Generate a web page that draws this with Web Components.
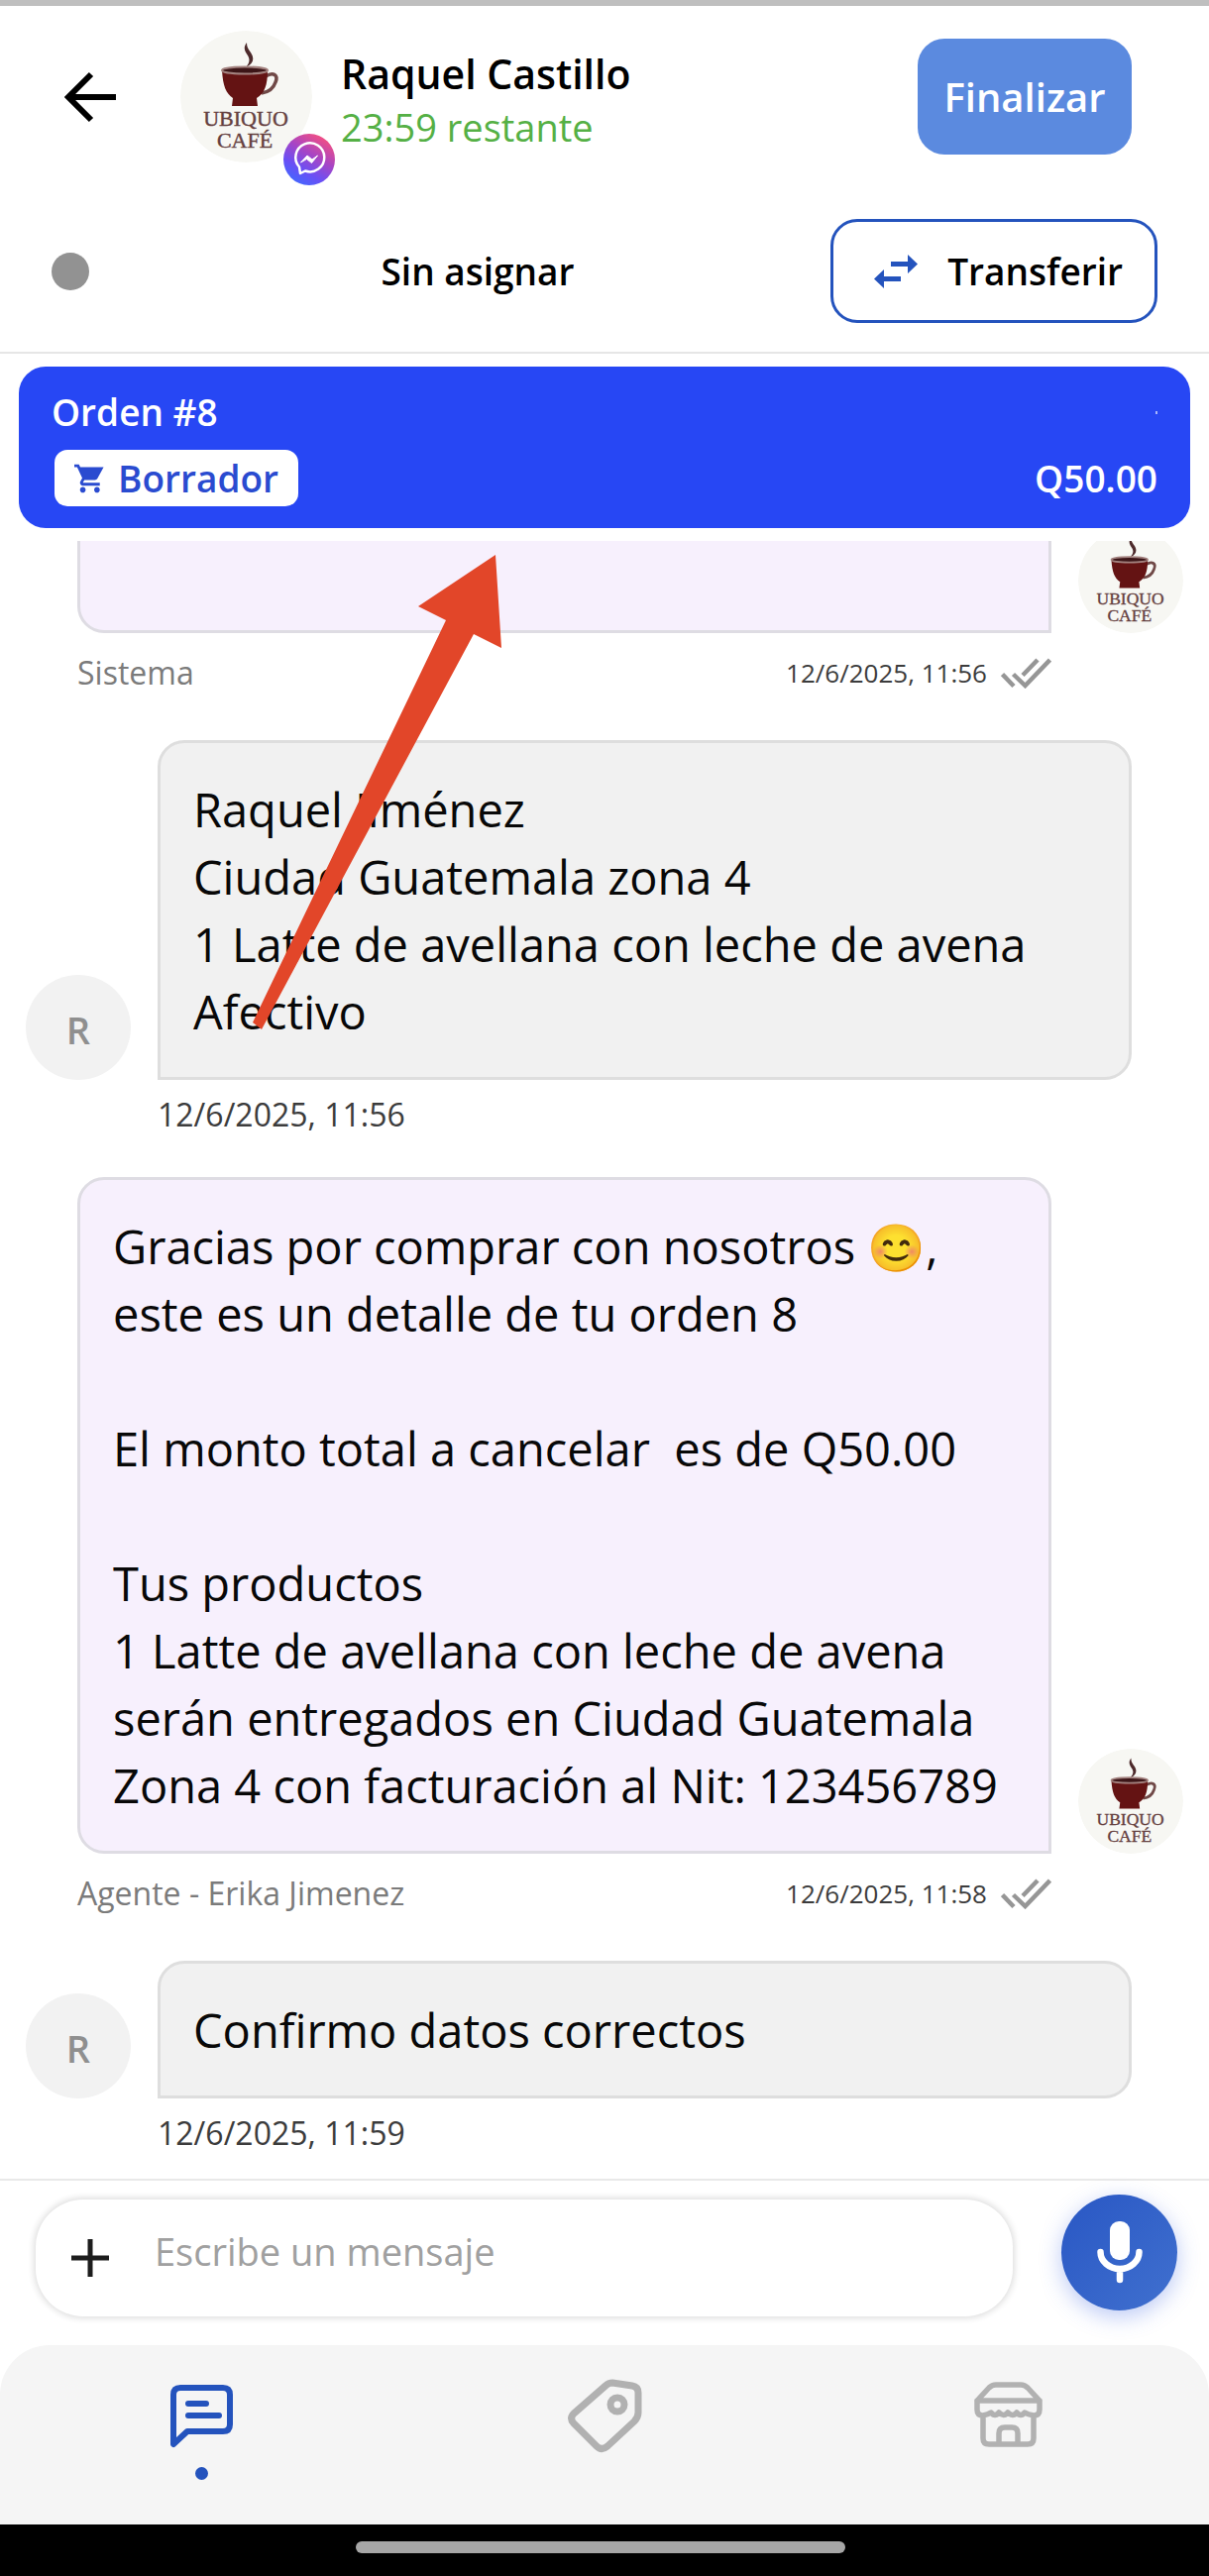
<!DOCTYPE html>
<html lang="es">
<head>
<meta charset="utf-8">
<meta name="viewport" content="width=device-width, initial-scale=1">
<title>Conversación - Raquel Castillo</title>
<style>
  html, body { margin: 0; height: 100%; }
  body { background: #fff; color: #000; font-family: "Open Sans", "Noto Sans", sans-serif; }
</style>
</head>
<body>
<chat-screen>
  <chat-header slot="header" name="Raquel Castillo" remaining="23:59 restante" assignee="Sin asignar"></chat-header>
  <order-card slot="order" state="Borrador" total="Q50.00">Orden #8</order-card>
  <chat-message kind="sent" author="Sistema" time="12/6/2025, 11:56"></chat-message>
  <chat-message kind="received" initial="R" time="12/6/2025, 11:56">Raquel Jiménez
Ciudad Guatemala zona 4
1 Latte de avellana con leche de avena
Afectivo</chat-message>
  <chat-message kind="sent" author="Agente - Erika Jimenez" time="12/6/2025, 11:58">Gracias por comprar con nosotros 😊,
este es un detalle de tu orden 8

El monto total a cancelar  es de Q50.00

Tus productos
1 Latte de avellana con leche de avena
serán entregados en Ciudad Guatemala
Zona 4 con facturación al Nit: 123456789</chat-message>
  <chat-message kind="received" initial="R" time="12/6/2025, 11:59">Confirmo datos correctos</chat-message>
  <pointer-arrow slot="overlay"></pointer-arrow>
  <message-composer slot="composer"></message-composer>
  <bottom-nav slot="nav"></bottom-nav>
</chat-screen>

<script>
const define = (name, render) => customElements.define(name, class extends HTMLElement {
  connectedCallback() {
    if (this.shadowRoot) return;
    this.attachShadow({ mode: "open" }).innerHTML = render(this);
  }
});
const attr = (el, name) => el.getAttribute(name) || "";

define("chat-screen", () => `
  <style>
    :host { display: flex; flex-direction: column; height: 100vh; position: relative; }
    .status { height: 6px; background: #bfbfbf; flex: none; }
    .thread { flex: 1; min-height: 0; margin-top: 13px; overflow: hidden; display: flex; flex-direction: column; justify-content: flex-end; gap: 38px; padding: 0 26px 21px; }
  </style>
  <div class="status"></div>
  <slot name="header"></slot>
  <slot name="order"></slot>
  <main class="thread"><slot></slot></main>
  <slot name="composer"></slot>
  <slot name="nav"></slot>
  <slot name="overlay"></slot>
`);

define("cafe-logo", () => `
  <style>
    :host { display: block; border-radius: 50%; overflow: hidden; }
    svg { display: block; width: 100%; height: 100%; }
    text { font-family: "Liberation Serif", serif; font-size: 22px; fill: #65403f; stroke: #65403f; stroke-width: .4px; text-anchor: middle; }
  </style>
  <svg viewBox="0 0 133 133" role="img" aria-label="Ubiquo Café">
    <circle cx="66.500" cy="66.500" r="66.500" fill="#f7f7f3"/>
    <path d="M67 12c-4 5-2 9 1 13 3 5 1 8-2 12 8-4 9-9 5-15-3-4-4-6-4-10z" fill="#4d2a2b"/>
    <path d="M86 46c8-5 13-1 10 6-2 6-7 10-14 11" fill="none" stroke="#704947" stroke-width="3.500"/>
    <path d="M42 40c1 16 4 23 11 28l-1 8h26l-1-8c8-5 11-13 11-28z" fill="#641313"/>
    <ellipse cx="65" cy="40" rx="23" ry="3.500" fill="#3c1517" stroke="#a3827f" stroke-width="2"/>
    <text x="66" y="96">UBIQUO</text>
    <text x="65" y="118">CAFÉ</text>
  </svg>
`);

define("chat-header", el => `
  <style>
    :host { display: block; flex: none; border-bottom: 2px solid #e6e6e6; }
    .row { display: flex; align-items: center; }
    .top { padding: 25px 78px 0 62px; }
    .bottom { padding: 57px 52px 29px; }
    button { font: inherit; cursor: pointer; }
    .back { border: 0; background: none; padding: 0; width: 60px; height: 60px; margin-right: 60px; }
    .back svg, .transfer svg, .badge { display: block; }
    .avatar { position: relative; width: 133px; height: 133px; margin-right: 29px; }
    .badge { position: absolute; right: -23px; bottom: -23px; width: 52px; height: 52px; }
    .who { flex: 1; padding-top: 8px; }
    h1, p { margin: 0; }
    h1 { font-size: 41px; line-height: 52px; font-weight: 600; }
    p { font-size: 38px; line-height: 56px; color: #55b045; }
    .finish { width: 216px; height: 117px; border: 0; border-radius: 27px; background: #5b8adf; color: #fff; font-size: 40px; font-weight: 600; padding: 0; }
    .dot { width: 38px; height: 38px; border-radius: 50%; background: #929292; margin-right: 36px; }
    .assignee { flex: 1; text-align: center; font-size: 37px; font-weight: 600; }
    .transfer { display: flex; align-items: center; justify-content: space-between; width: 330px; height: 105px; box-sizing: border-box; border: 3px solid #2453bd; border-radius: 27px; background: #fff; color: #000; padding: 0 32px 0 41px; font-size: 37px; font-weight: 600; }
  </style>
  <div class="row top">
    <button class="back" aria-label="Volver"><svg viewBox="0 0 60 60"><path d="M55 30H8M30 7 7 30l23 23" fill="none" stroke="#000" stroke-width="6"/></svg></button>
    <div class="avatar">
      <cafe-logo style="height:100%"></cafe-logo>
      <svg class="badge" viewBox="0 0 52 52" role="img" aria-label="Messenger">
        <defs><linearGradient id="g" x1="0.200" y1="1" x2="0.800" y2="0"><stop offset="0" stop-color="#3d6bff"/><stop offset=".3" stop-color="#6a4ff5"/><stop offset=".6" stop-color="#a845c4"/><stop offset="1" stop-color="#ff5078"/></linearGradient></defs>
        <circle cx="26" cy="26" r="26" fill="url(#g)"/>
        <path d="M17 40l5-2.500A14.500 14.500 0 1 0 16 33.500z" fill="none" stroke="#fff" stroke-width="2.500" stroke-linejoin="round"/>
        <path d="M17.500 29l6.500-7 5 4 5.500-4-6 7.500-5-4z" fill="#fff" stroke="#fff"/>
      </svg>
    </div>
    <div class="who"><h1>${attr(el, "name")}</h1><p>${attr(el, "remaining")}</p></div>
    <button class="finish">Finalizar</button>
  </div>
  <div class="row bottom">
    <span class="dot"></span>
    <span class="assignee">${attr(el, "assignee")}</span>
    <button class="transfer"><svg width="44" height="34" viewBox="0 0 44 34" fill="#2453bd"><path d="M17 7h17V0l10 9.500L34 19v-7H17zM27 22H10v-7L0 24.500 10 34v-7h17z"/></svg>Transferir</button>
  </div>
`);

define("order-card", el => `
  <style>
    :host { display: flex; justify-content: space-between; align-items: stretch; flex: none; box-sizing: border-box; margin: 13px 19px 0; height: 163px; padding: 20px 33px 22px; border-radius: 27px; background: #2747f4; color: #fff; font-size: 37px; font-weight: 600; line-height: 52px; }
    .left, .right { display: flex; flex-direction: column; justify-content: space-between; }
    .left { align-items: flex-start; }
    .right { align-items: flex-end; }
    .state { display: flex; align-items: center; gap: 14px; height: 57px; margin-left: 3px; padding: 0 20px; border-radius: 13px; background: #fff; color: #2a4bd0; line-height: 57px; }
    .speck { width: 2px; height: 3px; margin-top: 25px; background: #a9b6fb; }
    .total { line-height: 57px; }
  </style>
  <div class="left">
    <span><slot></slot></span>
    <span class="state"><svg width="30" height="30" viewBox="1 2 21 20" fill="currentColor"><path d="M7 18c-1.100 0-1.990.900-1.990 2S5.900 22 7 22s2-.900 2-2-.900-2-2-2zM1 2v2h2l3.600 7.590-1.350 2.450c-.160.280-.250.610-.250.960 0 1.100.900 2 2 2h12v-2H7.420c-.140 0-.250-.110-.250-.250l.030-.120.900-1.630h7.450c.750 0 1.410-.410 1.750-1.030L21.700 4H5.210l-.940-2H1zm16 16c-1.100 0-1.990.900-1.990 2s.890 2 1.990 2 2-.900 2-2-.900-2-2-2z"/></svg>${attr(el, "state")}</span>
  </div>
  <div class="right"><span class="speck"></span><span class="total">${attr(el, "total")}</span></div>
`);

define("chat-message", el => {
  const sent = attr(el, "kind") === "sent";
  const avatar = sent ? `<cafe-logo class="avatar"></cafe-logo>` : `<span class="avatar initial">${attr(el, "initial")}</span>`;
  const bubble = `<div class="bubble"><slot></slot></div>`;
  return `
  <style>
    :host { display: block; flex: none; font-size: 47px; line-height: 68px; color: #080808; }
    .line { display: flex; align-items: flex-end; gap: 27px; }
    .sent .line, .sent .meta { padding-left: 52px; }
    .received .line { padding-right: 52px; }
    .avatar { width: 106px; height: 106px; flex: none; }
    .initial { border-radius: 50%; background: #f2f2f2; color: #8f8f8f; font-size: 38px; font-weight: 600; line-height: 110px; text-align: center; }
    .bubble { flex: 1; min-width: 0; min-height: 68px; padding: 33px 33px 32px; border: 3px solid #dedede; border-radius: 27px; white-space: pre-wrap; }
    .sent .bubble { background: #f7f0fd; border-color: #dedce3; border-bottom-right-radius: 0; }
    .received .bubble { background: #f1f1f1; border-bottom-left-radius: 0; }
    .meta { display: flex; align-items: center; padding-top: 10px; color: #3c3c3c; }
    .sent .meta { height: 60px; padding-right: 133px; font-size: 26px; }
    .received .meta { height: 50px; padding-left: 133px; font-size: 32px; }
    .author { flex: 1; font-size: 32px; color: #7b7b7b; }
    svg { margin-left: 14px; }
  </style>
  <article class="${sent ? "sent" : "received"}">
    <div class="line">${sent ? bubble + avatar : avatar + bubble}</div>
    <div class="meta">${sent ? `<span class="author">${attr(el, "author")}</span>` : ""}<time>${attr(el, "time")}</time>${sent ? `<svg width="51" height="31" viewBox="0 0 51 31" fill="none" stroke="#969696" stroke-width="4.500"><path d="M1.500 16.500 13 28.500M12.500 16.500l12 11.500L49.500 2M22 17.500 37 2"/></svg>` : ""}</div>
  </article>`;
});

define("pointer-arrow", () => `
  <style>
    :host { position: absolute; left: 255px; top: 560px; pointer-events: none; }
    svg { display: block; }
  </style>
  <svg width="252" height="480" viewBox="0 0 252 480" aria-hidden="true"><path d="M245 0 251 94 223 80 9 479 0 472 195 66 167 52z" fill="#e24629"/></svg>
`);

define("message-composer", () => `
  <style>
    :host { display: flex; align-items: flex-start; justify-content: space-between; gap: 49px; flex: none; box-sizing: border-box; height: 168px; border-top: 2px solid #e9e9e9; padding: 14px 32px 0 36px; }
    .pill { display: flex; align-items: center; flex: 1; min-width: 0; height: 118px; margin-top: 5px; border-radius: 48px; background: #fff; box-shadow: 0 0 6px 2px rgba(0, 0, 0, .13); }
    button { border: 0; padding: 0; cursor: pointer; flex: none; }
    .add { width: 110px; height: 60px; background: none; }
    .add svg, .mic svg { display: block; margin: auto; }
    input { flex: 1; min-width: 0; border: 0; outline: 0; background: none; margin: 0; padding: 0 30px 14px 10px; font: 500 38px "Open Sans", "Noto Sans", sans-serif; color: #222; }
    input::placeholder { color: #a0a0a0; opacity: 1; }
    .mic { width: 117px; height: 117px; border-radius: 50%; background: linear-gradient(135deg, #2957c4, #4070cf); box-shadow: 0 6px 22px rgba(60, 100, 225, .35); }
  </style>
  <div class="pill">
    <button class="add" aria-label="Adjuntar"><svg width="38" height="38" viewBox="0 0 38 38"><path d="M19 0v38M0 19h38" stroke="#1d1d1d" stroke-width="5"/></svg></button>
    <input type="text" placeholder="Escribe un mensaje" aria-label="Escribe un mensaje">
  </div>
  <button class="mic" aria-label="Grabar audio"><svg width="46" height="64" viewBox="0 0 46 64"><rect x="13" y="0" width="20" height="39" rx="9" fill="#fff"/><path d="M3.500 31a19.500 17 0 0 0 39 0M23 50v9" fill="none" stroke="#fff" stroke-width="6.500" stroke-linecap="round"/></svg></button>
`);

define("bottom-nav", () => `
  <style>
    :host { display: block; flex: none; background: #000; }
    nav { display: grid; grid-template-columns: repeat(3, 1fr); height: 181px; box-sizing: border-box; padding-top: 32px; background: #f5f5f5; border-radius: 50px 50px 0 0; }
    .back { background: #fff; }
    a { display: flex; flex-direction: column; align-items: center; gap: 13px; color: #b1b1b1; }
    a.on { color: #2453bd; }
    .on::after { content: ""; width: 13px; height: 13px; border-radius: 50%; background: currentColor; }
    svg { display: block; fill: none; stroke: currentColor; stroke-width: 6; stroke-linejoin: round; stroke-linecap: round; }
    .bar { height: 52px; display: flex; align-items: center; justify-content: center; padding: 0 8px 6px 0; box-sizing: border-box; }
    .bar i { width: 494px; height: 12px; border-radius: 6px; background: #a6a6a6; }
  </style>
  <div class="back"><nav>
    <a class="on" href="#chats" aria-label="Chats"><svg width="78" height="78" viewBox="0 0 78 78"><path d="M11 68V18q0-7 7-7h43q7 0 7 7v30q0 7-7 7H25zM26 27h18M26 39h31"/></svg></a>
    <a href="#etiquetas" aria-label="Etiquetas"><svg width="78" height="78" viewBox="-2 -2 78 78" style="stroke-width:7"><path d="M6 45q-5-5 0-10L38 7q3-3 7-3l20 3q6 1 6 7v20q0 5-4 9L40 68q-6 5-11 0z"/><circle cx="50" cy="26" r="7"/></svg></a>
    <a href="#tienda" aria-label="Tienda"><svg width="78" height="78" viewBox="0 0 78 78"><path d="M8 24v9q0 6 6 6M8 24 20 11q3-3 7-3h25q4 0 7 3l12 13H8m63 0v9q0 6-6 6M14 39q5-1 8-3 4 5 8 0 5 5 9 0 5 5 9 0 4 5 8 0 3 2 9 3M14 39v23q0 6 6 6h39q6 0 6-6V39M30 68V57q0-6 6-6h7q6 0 6 6v11" stroke-width="5.500"/></svg></a>
  </nav></div>
  <div class="bar"><i></i></div>
`);
</script>
</body>
</html>
